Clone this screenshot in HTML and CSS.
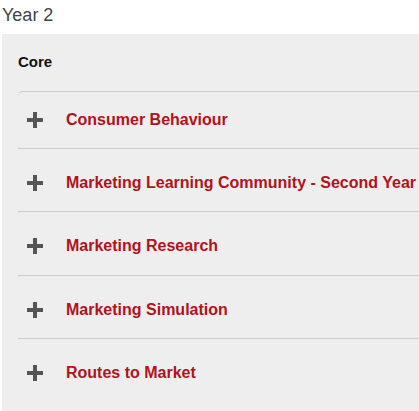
FILE: index.html
```html
<!DOCTYPE html>
<html lang="en">
<head>
<meta charset="utf-8">
<title>Year 2</title>
<link rel="stylesheet" href="styles.css">
</head>
<body>
<h2 class="year">Year 2</h2>
<section class="panel">
  <h3 class="group">Core</h3>
  <ul class="modules">
    <li class="module"><span class="plus"></span><a class="name" href="#">Consumer Behaviour</a></li>
    <li class="module"><span class="plus"></span><a class="name" href="#">Marketing Learning Community - Second Year</a></li>
    <li class="module"><span class="plus"></span><a class="name" href="#">Marketing Research</a></li>
    <li class="module"><span class="plus"></span><a class="name" href="#">Marketing Simulation</a></li>
    <li class="module"><span class="plus"></span><a class="name" href="#">Routes to Market</a></li>
  </ul>
</section>
</body>
</html>
```
FILE: styles.css
```css
html, body {
  margin: 0;
  padding: 0;
  background: #ffffff;
  overflow: hidden;
}
body {
  font-family: "Liberation Sans", Arial, sans-serif;
  width: 419px;
  height: 411px;
}
.year {
  margin: 4px 0 8px 2px;
  font-size: 18px;
  line-height: 22px;
  font-weight: normal;
  color: #444444;
}
.panel {
  margin-left: 2px;
  width: 417px;
  background: #eeeeee;
  padding: 19px 0 10px 16px;
  box-sizing: border-box;
  overflow: hidden;
}
.group {
  margin: 0 0 20px 0;
  font-size: 15px;
  line-height: 18px;
  font-weight: bold;
  color: #111111;
}
.modules {
  list-style: none;
  margin: 0;
  padding: 0;
  border-top: 1px solid #cccccc;
  border-top-left-radius: 5px;
}
.module {
  display: flex;
  align-items: center;
  padding: 25px 0 19.34px 9px;
  line-height: 18px;
  border-bottom: 1px solid #cccccc;
  white-space: nowrap;
}
.module:first-child {
  padding-top: 19px;
  padding-bottom: 19px;
}
.module:last-child {
  border-bottom: none;
}
.plus {
  position: relative;
  width: 16px;
  height: 16px;
  flex: none;
  margin-right: 23px;
}
.plus::before,
.plus::after {
  content: "";
  position: absolute;
  background: #555555;
}
.plus::before {
  left: 0;
  top: 6px;
  width: 16px;
  height: 4px;
}
.plus::after {
  left: 6px;
  top: 0;
  width: 4px;
  height: 16px;
}
.name {
  font-size: 16px;
  font-weight: bold;
  color: #b1121c;
  text-decoration: none;
}
```
